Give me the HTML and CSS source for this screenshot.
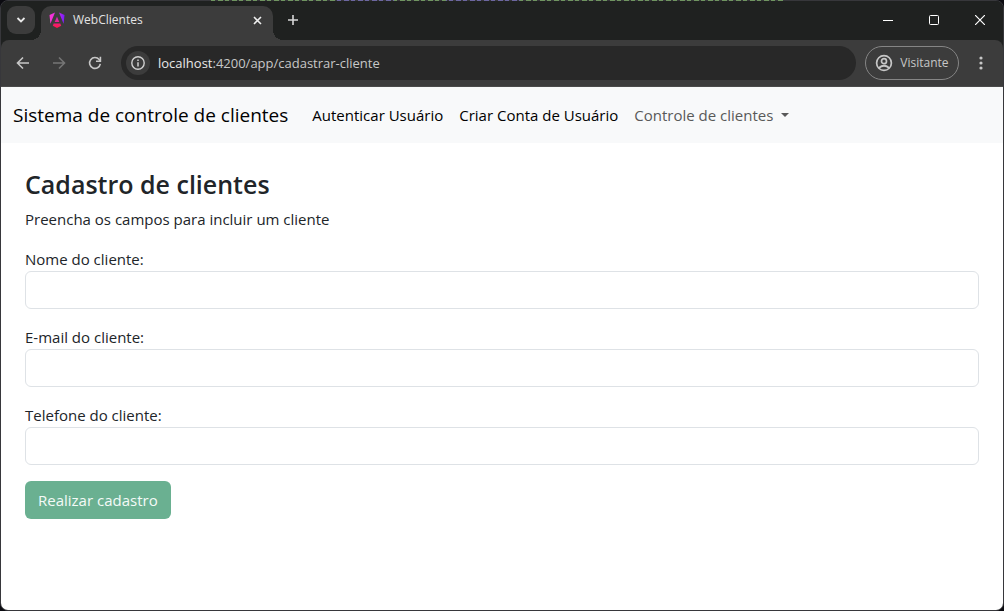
FILE: index.html
```html
<!DOCTYPE html>
<html lang="pt-BR">
<head>
<meta charset="utf-8">
<title>WebClientes</title>
<link rel="stylesheet" href="styles.css">
</head>
<body>
<div class="window">
  <header class="tab-strip">
    <button class="tab-search" aria-label="Pesquisar guias">
      <svg width="10" height="8" viewBox="0 0 10 8"><path d="M1.500 2 5 5.500 8.500 2" fill="none" stroke="#e8e8e8" stroke-width="1.800"/></svg>
    </button>
    <div class="tab">
      <svg class="favicon" width="16" height="17" viewBox="0 0 16 17">
        <defs>
          <linearGradient id="mark" x1="0" y1="0" x2="16" y2="0" gradientUnits="userSpaceOnUse"><stop offset="0" stop-color="#ff38d2"/><stop offset=".45" stop-color="#e32be4"/><stop offset="1" stop-color="#6d1cff"/></linearGradient>
          <linearGradient id="base" x1="0" y1="5" x2="0" y2="16" gradientUnits="userSpaceOnUse"><stop offset="0" stop-color="#d828c8"/><stop offset="1" stop-color="#ff1744"/></linearGradient>
        </defs>
        <path d="M6 .5.500 3l.9 8.800zM10 .5 15.500 3l-.9 8.800z" fill="url(#mark)"/>
        <path d="M8 4.800 5.700 10h4.600zM4.700 11.500 3.800 13.700 8 16l4.200-2.300-.9-2.200z" fill="url(#base)"/>
      </svg>
      <span class="tab-title">WebClientes</span>
      <button class="tab-close" aria-label="Fechar guia">
        <svg width="9" height="9" viewBox="0 0 9 9"><path d="m1 1 7 7M8 1 1 8" stroke="#eee" stroke-width="1.600"/></svg>
      </button>
    </div>
    <button class="new-tab" aria-label="Nova guia">
      <svg width="10" height="10" viewBox="0 0 10 10"><path d="M5 0v10M0 5h10" stroke="#d8d8d8" stroke-width="1.600"/></svg>
    </button>
    <div class="window-controls">
      <button aria-label="Minimizar"><svg width="10" height="10" viewBox="0 0 10 10"><path d="M0 5.500h10" stroke="#fff"/></svg></button>
      <button aria-label="Maximizar"><svg width="10" height="10" viewBox="0 0 10 10"><rect x=".5" y=".5" width="9" height="9" rx="1" fill="none" stroke="#fff"/></svg></button>
      <button aria-label="Fechar"><svg width="10" height="10" viewBox="0 0 10 10"><path d="m0 0 10 10M10 0 0 10" stroke="#fff" stroke-width="1.200"/></svg></button>
    </div>
  </header>

  <div class="toolbar">
    <div class="history">
      <button aria-label="Voltar"><svg width="14" height="14" viewBox="0 0 14 14"><path d="M13 7H2M7 1.500 1.500 7 7 12.500" fill="none" stroke="#c7c7c7" stroke-width="1.600"/></svg></button>
      <button aria-label="Avançar" disabled><svg width="14" height="14" viewBox="0 0 14 14"><path d="M1 7h11M7 1.500 12.500 7 7 12.500" fill="none" stroke="#757575" stroke-width="1.600"/></svg></button>
      <button aria-label="Recarregar"><svg width="14" height="14" viewBox="0 0 14 14"><path d="M12.300 7.800A5.400 5.400 0 1 1 11.200 3.600L12.500 5" fill="none" stroke="#c7c7c7" stroke-width="1.600"/><path d="M12.400.8v4.500H8" fill="none" stroke="#c7c7c7" stroke-width="1.600"/></svg></button>
    </div>
    <div class="address">
      <button class="site-info" aria-label="Informações do site">
        <svg width="14" height="14" viewBox="0 0 14 14"><circle cx="7" cy="7" r="6.200" fill="none" stroke="#d0d0d0" stroke-width="1.400"/><path d="M7 6.200v4.300M7 3.500V5" stroke="#d0d0d0" stroke-width="1.500"/></svg>
      </button>
      <span class="url"><span class="host">localhost</span>:4200/app/cadastrar-cliente</span>
    </div>
    <button class="profile">
      <svg width="18" height="18" viewBox="0 0 18 18" fill="none" stroke="#c7c7c7" stroke-width="1.700"><circle cx="9" cy="9" r="7.400"/><circle cx="9" cy="7.200" r="2.500"/><path d="M3.800 14Q9 9.500 14.200 14"/></svg>
      <span>Visitante</span>
    </button>
    <button class="menu" aria-label="Menu">
      <svg width="4" height="14" viewBox="0 0 4 14" fill="#c7c7c7"><circle cx="2" cy="2" r="1.600"/><circle cx="2" cy="7" r="1.600"/><circle cx="2" cy="12" r="1.600"/></svg>
    </button>
  </div>

  <div class="page">
    <nav class="navbar">
      <a class="brand" href="#">Sistema de controle de clientes</a>
      <a class="nav-link active" href="#">Autenticar Usuário</a>
      <a class="nav-link active" href="#">Criar Conta de Usuário</a>
      <a class="nav-link dropdown" href="#">Controle de clientes</a>
    </nav>
    <main class="content">
      <h1>Cadastro de clientes</h1>
      <p>Preencha os campos para incluir um cliente</p>
      <form>
        <div class="field">
          <label for="nome">Nome do cliente:</label>
          <input id="nome" type="text">
        </div>
        <div class="field">
          <label for="email">E-mail do cliente:</label>
          <input id="email" type="email">
        </div>
        <div class="field">
          <label for="telefone">Telefone do cliente:</label>
          <input id="telefone" type="tel">
        </div>
        <button class="submit" type="submit" disabled>Realizar cadastro</button>
      </form>
    </main>
  </div>
</div>
</body>
</html>
```
FILE: styles.css
```css
* { box-sizing: border-box; }

body {
  margin: 0;
  background: #0b0b10;
  font: 15px/24px "Open Sans", "Noto Sans", sans-serif;
  color: #212529;
}

button {
  display: flex;
  align-items: center;
  justify-content: center;
  padding: 0;
  border: 0;
  background: none;
  font: inherit;
  color: inherit;
}

a { color: inherit; text-decoration: none; }

svg { display: block; flex: none; }

.window {
  position: relative;
  display: flex;
  flex-direction: column;
  min-height: 100vh;
  border: 1px solid #37373b;
  border-radius: 8px;
  background: #1f2120;
}

/* Editor text behind the window showing along its top edge */
.window::before {
  content: "";
  position: absolute;
  top: -1px;
  left: 21%;
  right: 22%;
  height: 1px;
  background:
    repeating-linear-gradient(90deg, transparent 0 4px, #37373b 4px 7px, transparent 7px 12px, #37373b 12px 14px),
    linear-gradient(90deg, #6f9460 0 22%, #6c66a0 22% 32%, #6f9460 32% 41%, #6c66a0 41% 54%, #6f9460 54%);
}

.tab-strip {
  display: flex;
  align-items: flex-end;
  height: 39px;
  padding-left: 6px;
  border-radius: 7px 7px 0 0;
  background: #1f2120;
}

.tab-search {
  width: 28px;
  height: 28px;
  margin: 0 6px 6px 0;
  border-radius: 9px;
  background: #3c3c3c;
}

.tab {
  position: relative;
  display: flex;
  align-items: center;
  width: 232px;
  height: 34px;
  padding: 0 10px 6px 8px;
  border-radius: 10px 10px 0 0;
  background: #3c3c3c;
  font-size: 12px;
  color: #e3e3e3;
}

.tab::before,
.tab::after {
  content: "";
  position: absolute;
  bottom: 0;
  width: 10px;
  height: 10px;
}

.tab::before {
  right: 100%;
  background: radial-gradient(circle at 0 0, transparent 10px, #3c3c3c 10px);
}

.tab::after {
  left: 100%;
  background: radial-gradient(circle at 100% 0, transparent 10px, #3c3c3c 10px);
}

.tab-title { flex: 1; margin-left: 8px; }

.tab-close { width: 12px; height: 16px; }

.new-tab { width: 28px; height: 28px; margin: 0 0 6px 6px; }

.window-controls { display: flex; margin-left: auto; }

.window-controls button { width: 46px; height: 40px; }

.toolbar {
  display: flex;
  align-items: center;
  height: 47px;
  padding-right: 8px;
  border-bottom: 1px solid #4a4a4a;
  border-radius: 8px 8px 0 0;
  background: #3c3c3c;
  color: #c7c7c7;
}

.history { display: flex; padding: 0 8px 0 4px; }

.history button { width: 36px; height: 34px; }

.address {
  display: flex;
  flex: 1;
  align-items: center;
  gap: 8px;
  height: 34px;
  padding-left: 5px;
  border-radius: 17px;
  background: #282828;
  font-size: 13px;
}

.site-info {
  width: 24px;
  height: 24px;
  border-radius: 50%;
  background: #3c3c3c;
}

.host { color: #e8e8e8; }

.profile {
  gap: 7px;
  width: 94px;
  height: 34px;
  margin-left: 9px;
  border: 1px solid #858585;
  border-radius: 17px;
  font-size: 12px;
}

.menu { width: 28px; height: 34px; margin-left: 8px; }

.page {
  flex: 1;
  border-radius: 0 0 7px 7px;
  background: #fff;
}

.navbar {
  display: flex;
  align-items: center;
  min-height: 56px;
  padding: 0 12px;
  background: #f8f9fa;
  color: #000;
}

.brand { margin-right: 16px; font-size: 19px; line-height: 30px; }

.nav-link { padding: 8px; }

.dropdown { color: #595959; }

.dropdown::after {
  content: "";
  display: inline-block;
  margin-left: 8px;
  vertical-align: 4px;
  border-top: 4px solid;
  border-right: 4px solid transparent;
  border-left: 4px solid transparent;
}

.content { padding: 24px; }

h1 { margin: 0 0 6px; font-size: 25px; font-weight: 600; line-height: 34px; }

p { margin: 0 0 16px; }

.field { margin-bottom: 16px; }

.field label { display: block; }

.field input {
  display: block;
  width: 100%;
  height: 38px;
  padding: 6px 12px;
  border: 1px solid #dee2e6;
  border-radius: 6px;
  background: #fff;
  font: inherit;
}

.submit {
  height: 38px;
  padding: 0 13px;
  border-radius: 6px;
  background: #6ab091;
  color: #f4faf7;
}
```
